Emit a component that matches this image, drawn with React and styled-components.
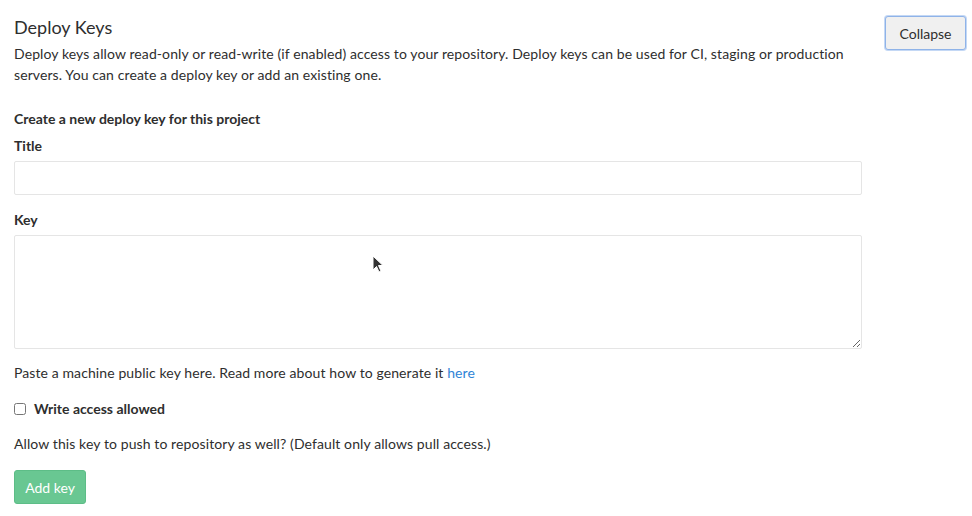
import React from 'react'
import styled, { createGlobalStyle } from 'styled-components'

const Global = createGlobalStyle`
  body {
    margin: 0;
    background: #fff;
    font-family: 'Lato', 'Open Sans', sans-serif;
    color: #2e2e2e;
  }
`

const Page = styled.div`
  position: relative;
  padding: 14px 6px 0 14px;
`

const Header = styled.div`
  display: flex;
  justify-content: space-between;
  align-items: flex-start;
`

const Intro = styled.div`
  width: 848px;
`

const Heading = styled.h4`
  margin: 0;
  font-size: 18px;
  font-weight: 400;
  line-height: 26px;
`

const Lead = styled.p`
  margin: 3px 0 0;
  font-size: 14px;
  line-height: 21px;
  letter-spacing: 0.1px;
`

const CollapseBtn = styled.button`
  margin-top: 2px;
  width: 81px;
  height: 34px;
  font-family: inherit;
  font-size: 14px;
  color: #2e2e2e;
  background: #f0f0f0;
  border: 1px solid #8fb3e8;
  box-shadow: 0 0 0 1px #c4d8f5;
  border-radius: 3px;
`

const Form = styled.form`
  width: 848px;
  margin-top: 25px;
`

const Section = styled.h5`
  margin: 0 0 9px;
  font-size: 14px;
  font-weight: 700;
  line-height: 18px;
`

const Label = styled.label`
  display: block;
  margin-bottom: 6px;
  font-size: 14px;
  font-weight: 700;
  line-height: 18px;
`

const Field = styled.div`
  margin-bottom: ${p => p.gap || 16}px;
`

const Input = styled.input`
  box-sizing: border-box;
  display: block;
  width: 100%;
  height: 34px;
  border: 1px solid #e5e5e5;
  border-radius: 2px;
  outline: none;
`

const Textarea = styled.textarea`
  box-sizing: border-box;
  display: block;
  width: 100%;
  height: 114px;
  border: 1px solid #e5e5e5;
  border-radius: 2px;
  outline: none;
`

const Help = styled.p`
  margin: 0;
  font-size: 14px;
  line-height: 20px;
  letter-spacing: 0.1px;
`

const Link = styled.a`
  color: #3084d6;
  text-decoration: none;
`

const CheckRow = styled.label`
  display: flex;
  align-items: center;
  gap: 8px;
  margin: 17px 0 16px;
  font-size: 14px;
  font-weight: 700;
  line-height: 18px;
`

const Box = styled.input`
  margin: 0;
  width: 12px;
  height: 12px;
`

const AddBtn = styled.button`
  margin-top: 16px;
  width: 72px;
  height: 34px;
  font-family: inherit;
  font-size: 14px;
  color: #fff;
  background: #69c792;
  border: 1px solid #5dbd87;
  border-radius: 3px;
`

const Cursor = styled.svg`
  position: absolute;
  left: 372px;
  top: 255px;
`

export default function App() {
  return (
    <Page>
      <Global />
      <Header>
        <Intro>
          <Heading>Deploy Keys</Heading>
          <Lead>
            Deploy keys allow read-only or read-write (if enabled) access to your repository. Deploy keys can be used for CI, staging or production servers. You can create a deploy key or add an existing one.
          </Lead>
        </Intro>
        <CollapseBtn>Collapse</CollapseBtn>
      </Header>
      <Form onSubmit={e => e.preventDefault()}>
        <Section>Create a new deploy key for this project</Section>
        <Field>
          <Label>Title</Label>
          <Input type="text" />
        </Field>
        <Field gap={14}>
          <Label>Key</Label>
          <Textarea />
        </Field>
        <Help>
          Paste a machine public key here. Read more about how to generate it <Link href="#">here</Link>
        </Help>
        <CheckRow>
          <Box type="checkbox" />
          Write access allowed
        </CheckRow>
        <Help>Allow this key to push to repository as well? (Default only allows pull access.)</Help>
        <AddBtn type="submit" disabled>Add key</AddBtn>
      </Form>
      <Cursor width="12" height="20" viewBox="0 0 12 20">
        <path d="M1 1 L1 15 L4.5 11.5 L7 17 L9 16 L6.5 10.5 L11 10.5 Z" fill="#333" stroke="#fff" strokeWidth="1" />
      </Cursor>
    </Page>
  )
}
